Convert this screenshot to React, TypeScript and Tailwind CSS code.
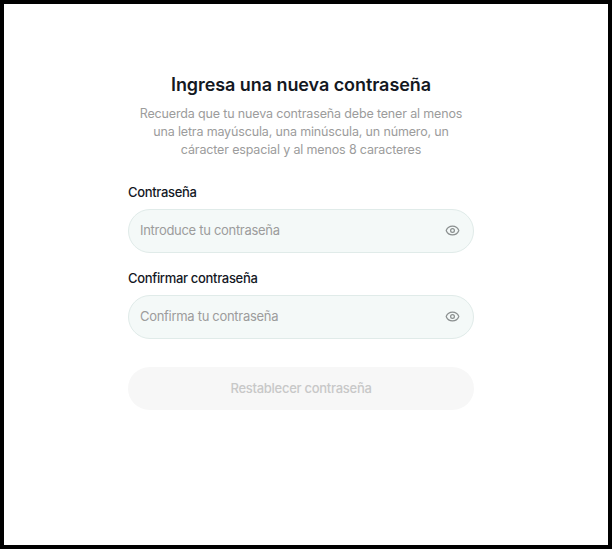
import { Eye } from "lucide-react";

const font = { fontFamily: "Inter, 'Noto Sans', sans-serif" };

function PasswordField({ label, placeholder }: { label: string; placeholder: string }) {
  return (
    <div className="flex flex-col">
      <label className="mb-[8.5px] text-[13px] leading-[18px] font-medium tracking-[-0.32px] text-[#14181f]">{label}</label>
      <div className="flex h-[43.5px] items-center justify-between rounded-full border border-[#e0ebe9] bg-[#f4f9f8] pl-[11px] pr-[13px]">
        <span className="text-[13px] tracking-[-0.3px] text-[#9c9c9c]">{placeholder}</span>
        <Eye className="h-[15px] w-[15px] text-[#8a8f8f]" strokeWidth={2} />
      </div>
    </div>
  );
}

export default function App() {
  return (
    <div className="h-[549px] w-[612px] border-4 border-black bg-white pt-[68px] pl-[124px]" style={font}>
      <div className="flex w-[346px] flex-col">
        <h1 className="text-center text-[18px] leading-[26px] font-semibold tracking-[-0.07px] text-[#14181f]">
          Ingresa una nueva contraseña
        </h1>
        <p className="mt-[7px] text-center text-[12.5px] leading-[18px] tracking-[-0.15px] text-[#9c9c9c]">
          Recuerda que tu nueva contraseña debe tener al menos
          <br />
          una letra mayúscula, una minúscula, un número, un
          <br />
          cáracter espacial y al menos 8 caracteres
        </p>
        <div className="mt-[23.5px] flex flex-col gap-[16px]">
          <PasswordField label="Contraseña" placeholder="Introduce tu contraseña" />
          <PasswordField label="Confirmar contraseña" placeholder="Confirma tu contraseña" />
        </div>
        <button className="mt-[28.5px] h-[43px] rounded-full bg-[#f7f7f7] text-[13px] font-medium tracking-[-0.27px] text-[#c8c8c8]">
          Restablecer contraseña
        </button>
      </div>
    </div>
  );
}
